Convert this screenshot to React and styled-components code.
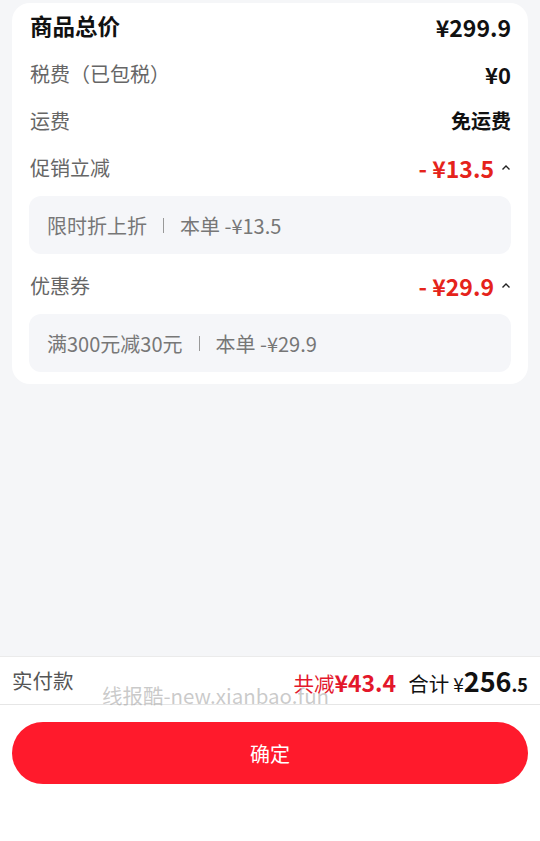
import React from "react";
import styled, { createGlobalStyle } from "styled-components";

const GlobalStyle = createGlobalStyle`
  html, body {
    margin: 0;
    padding: 0;
    background: #f5f6f8;
    font-family: "Noto Sans CJK SC", "Noto Sans", sans-serif;
  }
`;

const Page = styled.div`
  min-height: 100vh;
  display: flex;
  flex-direction: column;
`;

const Card = styled.div`
  margin: 3px 12px 0;
  background: #fff;
  border-radius: 18px;
  padding: 0 17px 12px 17px;
`;

const Row = styled.div`
  height: 47px;
  display: flex;
  align-items: center;
  justify-content: space-between;
  margin-top: ${(p) => (p.gap ? "8px" : "0")};
`;

const Label = styled.span`
  font-size: ${(p) => (p.strong ? "22.5px" : "20px")};
  font-weight: ${(p) => (p.strong ? 700 : 400)};
  color: ${(p) => (p.strong ? "#111" : "#666")};
  margin-top: ${(p) => (p.strong ? "-3px" : "0")};
  padding-left: 1px;
`;

const Value = styled.span`
  display: flex;
  align-items: center;
  gap: 7px;
  font-size: ${(p) => p.size || "20px"};
  font-weight: 700;
  color: ${(p) => (p.red ? "#e5231b" : "#111")};
`;

const Detail = styled.div`
  margin-top: 5px;
  height: 58px;
  border-radius: 12px;
  background: #f5f6f9;
  display: flex;
  align-items: center;
  padding-left: 18px;
  font-size: 20px;
  color: #777;
`;

const Bar = styled.span`
  width: 1px;
  height: 15px;
  background: #999;
  margin: 0 16px;
`;

const Spacer = styled.div`
  flex: 1;
`;

const Footer = styled.div`
  position: relative;
  background: #fff;
  border-top: 1px solid #ebebeb;
`;

const Summary = styled.div`
  height: 47px;
  display: flex;
  align-items: center;
  justify-content: space-between;
  padding: 0 12px;
  border-bottom: 1px solid #e6e6e6;
`;

const PayLabel = styled.span`
  font-size: 20.5px;
  color: #555;
  margin-top: -2px;
`;

const Totals = styled.div`
  display: flex;
  align-items: baseline;
`;

const Saved = styled.span`
  color: #e3172b;
  font-size: 20.5px;
  margin-right: 12px;
  b {
    font-size: 23px;
    font-weight: 700;
  }
`;

const Total = styled.span`
  color: #111;
  font-size: 20.5px;
  small {
    font-size: 19px;
    margin-left: 4px;
  }
  b {
    font-size: 27px;
    font-weight: 700;
  }
  i {
    font-style: normal;
    font-weight: 700;
    font-size: 18px;
  }
`;

const Watermark = styled.div`
  position: absolute;
  left: 102px;
  top: 23px;
  font-size: 20.5px;
  color: rgba(150, 150, 150, 0.5);
  pointer-events: none;
`;

const ButtonArea = styled.div`
  padding: 17px 12px 57px;
`;

const Confirm = styled.button`
  width: 100%;
  height: 62px;
  border: none;
  border-radius: 31px;
  background: #ff1a2c;
  color: #fff;
  font-family: inherit;
  font-size: 20px;
  font-weight: 400;
`;

const Caret = () => (
  <svg width="10" height="7" viewBox="0 0 10 7">
    <path d="M1.5 5.5 L5 2 L8.5 5.5" fill="none" stroke="#222" strokeWidth="1.4" />
  </svg>
);

export default function App() {
  return (
    <Page>
      <GlobalStyle />
      <Card>
        <Row>
          <Label strong>商品总价</Label>
          <Value size="23px">¥299.9</Value>
        </Row>
        <Row>
          <Label>税费（已包税）</Label>
          <Value size="22px">¥0</Value>
        </Row>
        <Row>
          <Label>运费</Label>
          <Value size="20px">免运费</Value>
        </Row>
        <Row>
          <Label>促销立减</Label>
          <Value red size="23px">
            - ¥13.5 <Caret />
          </Value>
        </Row>
        <Detail>
          限时折上折<Bar />本单 -¥13.5
        </Detail>
        <Row gap>
          <Label>优惠券</Label>
          <Value red size="23px">
            - ¥29.9 <Caret />
          </Value>
        </Row>
        <Detail>
          满300元减30元<Bar />本单 -¥29.9
        </Detail>
      </Card>
      <Spacer />
      <Footer>
        <Summary>
          <PayLabel>实付款</PayLabel>
          <Totals>
            <Saved>
              共减<b>¥43.4</b>
            </Saved>
            <Total>
              合计<small>¥</small>
              <b>256</b>
              <i>.5</i>
            </Total>
          </Totals>
        </Summary>
        <Watermark>线报酷-new.xianbao.fun</Watermark>
        <ButtonArea>
          <Confirm>确定</Confirm>
        </ButtonArea>
      </Footer>
    </Page>
  );
}
